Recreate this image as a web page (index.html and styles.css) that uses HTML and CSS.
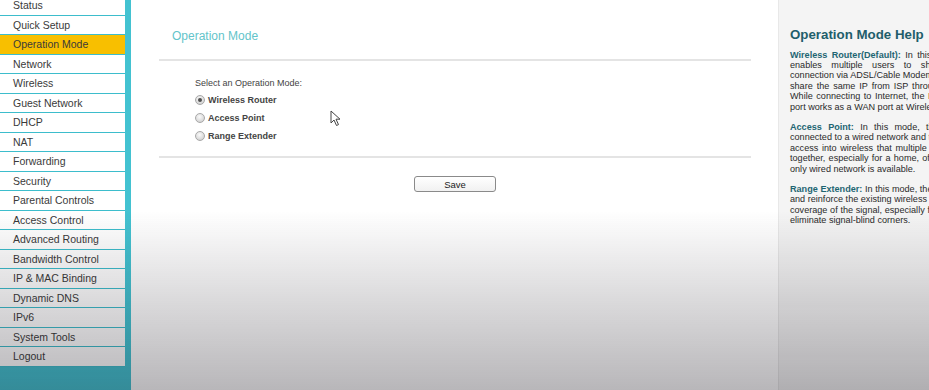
FILE: index.html
```html
<!DOCTYPE html>
<html>
<head>
<meta charset="utf-8">
<link rel="stylesheet" href="styles.css">
</head>
<body>
<div class="page">
  <nav class="sidebar">
    <ul class="menu">
      <li class="item">Status</li>
      <li class="item">Quick Setup</li>
      <li class="item active">Operation Mode</li>
      <li class="item">Network</li>
      <li class="item">Wireless</li>
      <li class="item">Guest Network</li>
      <li class="item">DHCP</li>
      <li class="item">NAT</li>
      <li class="item">Forwarding</li>
      <li class="item">Security</li>
      <li class="item">Parental Controls</li>
      <li class="item">Access Control</li>
      <li class="item">Advanced Routing</li>
      <li class="item">Bandwidth Control</li>
      <li class="item">IP &amp; MAC Binding</li>
      <li class="item">Dynamic DNS</li>
      <li class="item">IPv6</li>
      <li class="item">System Tools</li>
      <li class="item">Logout</li>
    </ul>
  </nav>
  <main class="main">
    <h1 class="title">Operation Mode</h1>
    <section class="form">
      <div class="prompt">Select an Operation Mode:</div>
      <div class="option"><span class="radio checked"></span><span class="opt-label">Wireless Router</span></div>
      <div class="option"><span class="radio"></span><span class="opt-label">Access Point</span></div>
      <div class="option"><span class="radio"></span><span class="opt-label">Range Extender</span></div>
    </section>
    <div class="actions"><button class="save">Save</button></div>
  </main>
  <aside class="help">
    <h2 class="help-title">Operation Mode Help</h2>
    <div class="help-body">
      <p class="para">
        <span class="jl"><span class="term">Wireless Router(Default):</span> In this mode, the router</span>
        <span class="jl">enables multiple users to share the Internet</span>
        <span class="jl">connection via ADSL/Cable Modem. The wireless ports</span>
        <span class="jl">share the same IP from ISP through Ethernet WAN</span>
        <span class="jl">While connecting to Internet, the Ethernet WAN port</span>
        <span class="ll">port works as a WAN port at Wireless Router mode.</span>
      </p>
      <p class="para">
        <span class="jl"><span class="term">Access Point:</span> In this mode, the router can be</span>
        <span class="jl">connected to a wired network and transform the wired</span>
        <span class="jl">access into wireless that multiple devices can share</span>
        <span class="jl">together, especially for a home, office or hotel where</span>
        <span class="ll">only wired network is available.</span>
      </p>
      <p class="para">
        <span class="jl"><span class="term">Range Extender:</span> In this mode, the router can extend</span>
        <span class="jl">and reinforce the existing wireless signal, enhance the</span>
        <span class="jl">coverage of the signal, especially for a large space to</span>
        <span class="ll">eliminate signal-blind corners.</span>
      </p>
    </div>
  </aside>
</div>
<svg class="cursor" width="12" height="17" viewBox="0 0 12 17"><path d="M1 1 L1 13 L4 10 L6.5 15.5 L8.5 14.6 L6 9.2 L10 9.2 Z" fill="#fff" stroke="#444" stroke-width="1" stroke-linejoin="round"/></svg>
</body>
</html>
```
FILE: styles.css
```css
html, body {
  margin: 0;
  padding: 0;
  height: 100%;
  overflow: hidden;
  background: #fff;
  font-family: "Liberation Sans", Arial, sans-serif;
}
body::after {
  content: "";
  position: fixed;
  left: 0; top: 0; right: 0; bottom: 0;
  pointer-events: none;
  background: linear-gradient(to bottom, rgba(20,15,25,0) 0%, rgba(20,15,25,0) 54%, rgba(20,15,25,0.16) 78%, rgba(20,15,25,0.3) 100%);
}
.page {
  display: flex;
  height: 390px;
}
.sidebar {
  width: 131px;
  flex: none;
  background: #43c2d1;
}
.menu {
  list-style: none;
  margin: -4px 0 0 0;
  padding: 0;
  width: 125px;
}
.item {
  height: 18.5px;
  line-height: 18.5px;
  border-bottom: 1px solid #3dbdcc;
  background: #fff;
  padding-left: 13px;
  font-size: 10.5px;
  color: #3a3a3a;
  white-space: nowrap;
}
.item.active {
  background: #f8bf00;
}
.main {
  flex: 1;
  padding: 0 27px 0 28px;
}
.title {
  margin: 29px 0 0 13px;
  height: 14px;
  line-height: 14px;
  font-size: 12px;
  font-weight: normal;
  color: #63c4ca;
}
.form {
  margin-top: 16px;
  border-top: 2px solid #e4e4e4;
  border-bottom: 2px solid #e4e4e4;
  padding: 16.5px 0 11px 36px;
}
.prompt {
  font-size: 9px;
  line-height: 11px;
  color: #444;
  margin-bottom: 2.5px;
}
.option {
  display: flex;
  align-items: center;
  height: 18px;
}
.radio {
  width: 8px;
  height: 8px;
  border: 1px solid #a8a8a8;
  border-radius: 50%;
  background: radial-gradient(circle at 45% 35%, #fafafa 0%, #dcdcdc 60%, #c4c4c4 100%);
  display: flex;
  align-items: center;
  justify-content: center;
  margin-right: 3px;
}
.radio.checked::before {
  content: "";
  width: 4px;
  height: 4px;
  border-radius: 50%;
  background: #505050;
}
.opt-label {
  font-size: 9px;
  font-weight: bold;
  color: #444;
}
.actions {
  display: flex;
  justify-content: center;
  padding-top: 18px;
}
.save {
  width: 82px;
  height: 16px;
  padding: 0;
  border: 1px solid #8a8a8a;
  border-radius: 3px;
  background: linear-gradient(#fff, #f1f1f1);
  font-family: "Liberation Sans", Arial, sans-serif;
  font-size: 9.5px;
  color: #222;
}
.help {
  width: 139px;
  flex: none;
  background: #f4f4f4;
  border-left: 1px solid #e8e8e8;
  padding-left: 11px;
  overflow: hidden;
}
.help-title {
  margin: 27px 0 0 0;
  font-size: 13.3px;
  line-height: 16px;
  font-weight: bold;
  color: #1f5e6b;
  white-space: nowrap;
}
.help-body {
  width: 216px;
  margin-top: 6.5px;
  font-size: 9.1px;
  line-height: 10.4px;
  color: #2a2a2a;
}
.para {
  margin: 0 0 10px 0;
}
.jl {
  display: block;
  text-align: justify;
  text-align-last: justify;
  white-space: nowrap;
}
.ll {
  display: block;
  white-space: nowrap;
}
.term {
  color: #1e6572;
  font-weight: bold;
}
.cursor {
  position: absolute;
  left: 330px;
  top: 110px;
}
```
